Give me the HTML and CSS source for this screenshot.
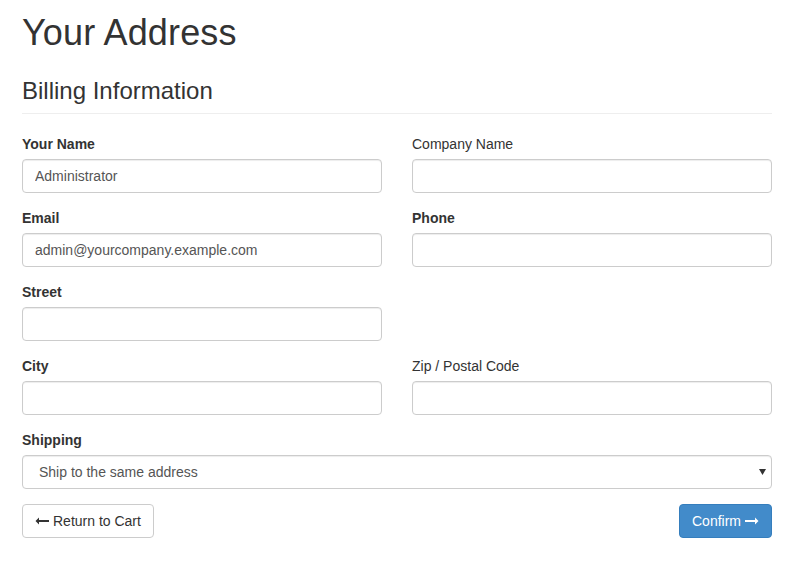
FILE: index.html
```html
<!DOCTYPE html>
<html>
<head>
<meta charset="utf-8">
<link rel="stylesheet" href="styles.css">
</head>
<body>
<div class="container">
  <h1 class="title">Your Address</h1>
  <div class="page-header"><h3>Billing Information</h3></div>
  <form class="form">
    <div class="row">
      <div class="group">
        <label class="bold">Your Name</label>
        <input class="control" type="text" value="Administrator">
      </div>
      <div class="group">
        <label>Company Name</label>
        <input class="control" type="text" value="">
      </div>
    </div>
    <div class="row">
      <div class="group">
        <label class="bold">Email</label>
        <input class="control" type="text" value="admin@yourcompany.example.com">
      </div>
      <div class="group">
        <label class="bold">Phone</label>
        <input class="control" type="text" value="">
      </div>
    </div>
    <div class="row">
      <div class="group">
        <label class="bold">Street</label>
        <input class="control" type="text" value="">
      </div>
      <div class="group"></div>
    </div>
    <div class="row">
      <div class="group">
        <label class="bold">City</label>
        <input class="control" type="text" value="">
      </div>
      <div class="group">
        <label>Zip / Postal Code</label>
        <input class="control" type="text" value="">
      </div>
    </div>
    <div class="group full">
      <label class="bold">Shipping</label>
      <div class="select-wrap">
        <select class="control select">
          <option>Ship to the same address</option>
        </select>
        <svg class="caret" width="7" height="6" viewBox="0 0 7 6"><path d="M0 0H7L3.5 6Z" fill="#333"/></svg>
      </div>
    </div>
    <div class="actions">
      <a class="btn btn-default"><svg class="arrow" width="14" height="8" viewBox="0 0 14 8"><path d="M4 0.5L0.5 4L4 7.5V5H14V3H4Z" fill="#333"/></svg>Return to Cart</a>
      <a class="btn btn-primary">Confirm<svg class="arrow arrow-r" width="14" height="8" viewBox="0 0 14 8"><path d="M10 0.5L13.5 4L10 7.5V5H0V3H10Z" fill="#fff"/></svg></a>
    </div>
  </form>
</div>
</body>
</html>
```
FILE: styles.css
```css
* { box-sizing: border-box; }
html, body { margin: 0; padding: 0; background: #fff; }
body {
  font-family: "Liberation Sans", Arial, sans-serif;
  font-size: 14px;
  line-height: 20px;
  color: #333;
}
.container { padding: 0 28px 0 22px; width: 800px; }
.title {
  font-size: 36px;
  line-height: 1.1;
  font-weight: 500;
  letter-spacing: 0.15px;
  margin: 13px 0 0;
}
.page-header {
  margin: 25px 0 20px;
  padding-bottom: 9px;
  border-bottom: 1px solid #eee;
}
.page-header h3 {
  font-size: 24px;
  line-height: 1.1;
  font-weight: 500;
  margin: 0;
}
.form { width: 750px; }
.row { display: grid; grid-template-columns: 360px 360px; column-gap: 30px; }
.group { display: flex; flex-direction: column; margin-bottom: 15px; }
label { display: block; margin-bottom: 5px; font-weight: normal; }
label.bold { font-weight: bold; }
.control {
  display: block;
  width: 100%;
  height: 34px;
  padding: 6px 12px;
  font-family: inherit;
  font-size: 14px;
  line-height: 20px;
  color: #555;
  background: #fff;
  border: 1px solid #ccc;
  border-radius: 4px;
  box-shadow: inset 0 1px 1px rgba(0,0,0,.075);
  outline: none;
  margin: 0;
}
.select-wrap { position: relative; }
.select {
  -webkit-appearance: none;
  appearance: none;
  padding-left: 16px;
}
.caret { position: absolute; right: 6px; top: 14px; }
.actions { display: flex; justify-content: space-between; }
.btn {
  display: inline-flex;
  align-items: center;
  height: 34px;
  padding: 6px 12px;
  font-size: 14px;
  line-height: 20px;
  border: 1px solid transparent;
  border-radius: 4px;
  text-decoration: none;
  cursor: pointer;
}
.btn-default { color: #333; background: #fff; border-color: #ccc; }
.btn-primary { color: #fff; background: #428bca; border-color: #357ebd; }
.arrow { margin-right: 4px; }
.arrow-r { margin: 0 0 0 4px; }
```
